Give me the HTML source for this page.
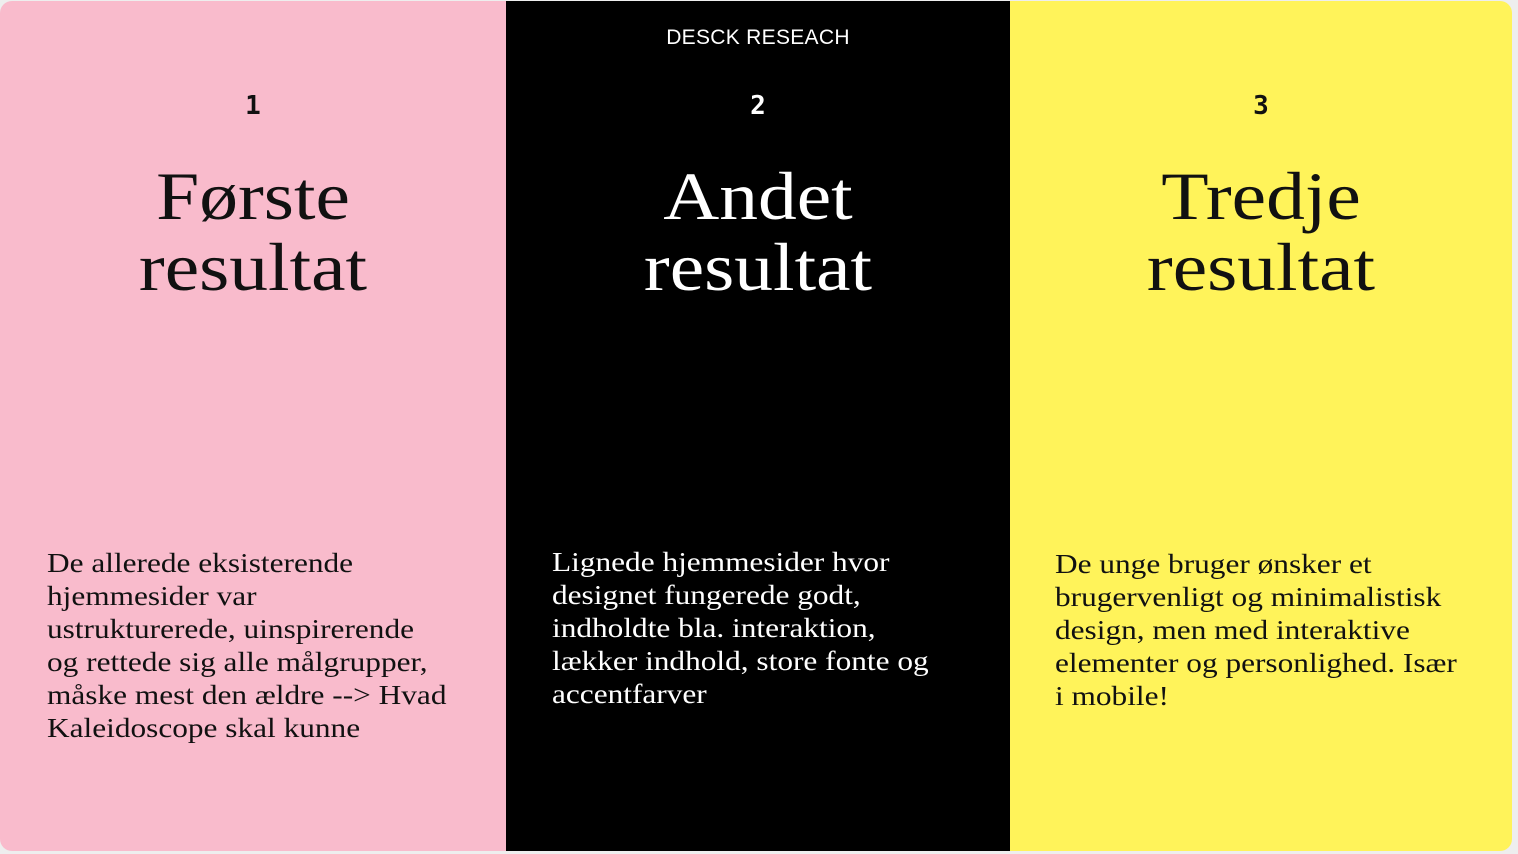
<!DOCTYPE html>
<html><head><meta charset="utf-8"><style>
html,body{margin:0;padding:0;width:1518px;height:854px;background:#eeeeee;overflow:hidden}
.wrap{position:absolute;left:0;top:1px;width:1512px;height:850px;border-radius:12px;overflow:hidden;display:flex}
.col{position:relative;height:100%}
.p{background:#f9bbcc;width:506px;color:#111}
.b{background:#000;width:504px;color:#fff}
.y{background:#fff35a;width:502px;color:#111}
.num{position:absolute;top:90px;left:0;right:0;text-align:center;font:700 26px "DejaVu Sans Mono","Liberation Mono",monospace}
.t{position:absolute;top:160px;left:0;right:0;text-align:center;font:68px/71px "Liberation Serif",serif;transform:scaleX(1.14)}
.d{position:absolute;left:47px;font:27px/33px "Liberation Serif",serif;white-space:nowrap;transform:scaleX(1.16);transform-origin:0 0}
.hd{position:absolute;top:25px;left:0;right:0;text-align:center;font:21px "Liberation Sans",sans-serif;color:#fff;letter-spacing:.3px}
</style></head><body>
<div class="wrap">
<div class="col p"><div class="num">1</div><div class="t">Første<br>resultat</div>
<div class="d" style="top:546px">De allerede eksisterende<br>hjemmesider var<br>ustrukturerede, uinspirerende<br>og rettede sig alle målgrupper,<br>måske mest den ældre --&gt; Hvad<br>Kaleidoscope skal kunne</div></div>
<div class="col b"><div class="hd">DESCK RESEACH</div><div class="num">2</div><div class="t">Andet<br>resultat</div>
<div class="d" style="top:545px;left:46px">Lignede hjemmesider hvor<br>designet fungerede godt,<br>indholdte bla. interaktion,<br>lækker indhold, store fonte og<br>accentfarver</div></div>
<div class="col y"><div class="num">3</div><div class="t">Tredje<br>resultat</div>
<div class="d" style="top:547px;left:45px">De unge bruger ønsker et<br>brugervenligt og minimalistisk<br>design, men med interaktive<br>elementer og personlighed. Især<br>i mobile!</div></div>
</div>
</body></html>
